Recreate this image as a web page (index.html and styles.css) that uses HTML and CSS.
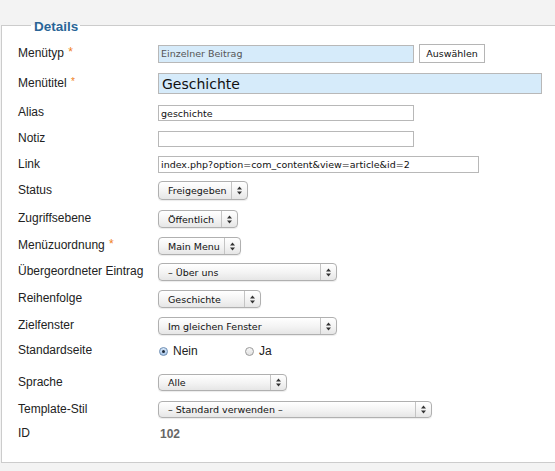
FILE: index.html
```html
<!DOCTYPE html>
<html lang="de">
<head>
<meta charset="utf-8">
<title>Details</title>
<link rel="stylesheet" href="styles.css">
</head>
<body>
<fieldset class="details">
  <legend class="legend">Details</legend>

  <div class="row row-type">
    <span class="lbl">Menütyp <span class="req">*</span></span>
    <input class="field field-ro w256 h19" type="text" value="Einzelner Beitrag" readonly>
    <span class="btn">Auswählen</span>
  </div>

  <div class="row row-title">
    <span class="lbl">Menütitel <span class="req req-sm">*</span></span>
    <input class="field field-title" type="text" value="Geschichte">
  </div>

  <div class="row row-alias">
    <span class="lbl">Alias</span>
    <input class="field w256" type="text" value="geschichte">
  </div>

  <div class="row row-note">
    <span class="lbl">Notiz</span>
    <input class="field w256" type="text" value="">
  </div>

  <div class="row row-link">
    <span class="lbl">Link</span>
    <input class="field w321" type="text" value="index.php?option=com_content&amp;view=article&amp;id=2" readonly>
  </div>

  <div class="row row-status">
    <span class="lbl">Status</span>
    <div class="select w90"><span class="sel-text">Freigegeben</span><span class="sel-arrow"><svg width="5" height="9" viewBox="0 0 5 9"><path d="M0 3.6 L2.5 0.4 L5 3.6 Z M0 5.4 L5 5.4 L2.5 8.6 Z" fill="#333"/></svg></span></div>
  </div>

  <div class="row row-access">
    <span class="lbl">Zugriffsebene</span>
    <div class="select w80"><span class="sel-text">Öffentlich</span><span class="sel-arrow"><svg width="5" height="9" viewBox="0 0 5 9"><path d="M0 3.6 L2.5 0.4 L5 3.6 Z M0 5.4 L5 5.4 L2.5 8.6 Z" fill="#333"/></svg></span></div>
  </div>

  <div class="row row-menu">
    <span class="lbl">Menüzuordnung <span class="req">*</span></span>
    <div class="select w83"><span class="sel-text">Main Menu</span><span class="sel-arrow"><svg width="5" height="9" viewBox="0 0 5 9"><path d="M0 3.6 L2.5 0.4 L5 3.6 Z M0 5.4 L5 5.4 L2.5 8.6 Z" fill="#333"/></svg></span></div>
  </div>

  <div class="row row-parent">
    <span class="lbl">Übergeordneter Eintrag</span>
    <div class="select w179"><span class="sel-text">– Über uns</span><span class="sel-arrow"><svg width="5" height="9" viewBox="0 0 5 9"><path d="M0 3.6 L2.5 0.4 L5 3.6 Z M0 5.4 L5 5.4 L2.5 8.6 Z" fill="#333"/></svg></span></div>
  </div>

  <div class="row row-order">
    <span class="lbl">Reihenfolge</span>
    <div class="select w103"><span class="sel-text">Geschichte</span><span class="sel-arrow"><svg width="5" height="9" viewBox="0 0 5 9"><path d="M0 3.6 L2.5 0.4 L5 3.6 Z M0 5.4 L5 5.4 L2.5 8.6 Z" fill="#333"/></svg></span></div>
  </div>

  <div class="row row-target">
    <span class="lbl">Zielfenster</span>
    <div class="select w179"><span class="sel-text">Im gleichen Fenster</span><span class="sel-arrow"><svg width="5" height="9" viewBox="0 0 5 9"><path d="M0 3.6 L2.5 0.4 L5 3.6 Z M0 5.4 L5 5.4 L2.5 8.6 Z" fill="#333"/></svg></span></div>
  </div>

  <div class="row row-radio">
    <span class="lbl">Standardseite</span>
    <span class="opt"><span class="radio radio-on"></span>Nein</span>
    <span class="opt"><span class="radio"></span>Ja</span>
  </div>

  <div class="row row-lang">
    <span class="lbl">Sprache</span>
    <div class="select w129"><span class="sel-text">Alle</span><span class="sel-arrow"><svg width="5" height="9" viewBox="0 0 5 9"><path d="M0 3.6 L2.5 0.4 L5 3.6 Z M0 5.4 L5 5.4 L2.5 8.6 Z" fill="#333"/></svg></span></div>
  </div>

  <div class="row row-tpl">
    <span class="lbl">Template-Stil</span>
    <div class="select w274"><span class="sel-text">– Standard verwenden –</span><span class="sel-arrow"><svg width="5" height="9" viewBox="0 0 5 9"><path d="M0 3.6 L2.5 0.4 L5 3.6 Z M0 5.4 L5 5.4 L2.5 8.6 Z" fill="#333"/></svg></span></div>
  </div>

  <div class="row row-id">
    <span class="lbl">ID</span>
    <span class="idval">102</span>
  </div>
</fieldset>
</body>
</html>
```

FILE: styles.css
```css
html, body {
  margin: 0;
  padding: 0;
}

body {
  background: #f3f3f3;
  overflow: hidden;
  width: 555px;
  height: 471px;
  font-family: "Liberation Sans", Arial, sans-serif;
  font-size: 12px;
  color: #222;
}

.details {
  margin: 15px 0 0 1px;
  width: 554px;
  box-sizing: border-box;
  border: 1px solid #cccccc;
  border-right: none;
  background: #ffffff;
  padding: 9px 0 20px 16px;
  min-inline-size: 0;
}

.legend {
  margin-left: 13px;
  padding: 4px 2px 0 3px;
  font-family: "Liberation Sans", Arial, sans-serif;
  font-size: 13.5px;
  font-weight: bold;
  line-height: 16px;
  color: #2a6597;
}

.row {
  display: flex;
  align-items: center;
  height: 18px;
  margin-bottom: 9px;
}

.row-type { height: 19px; margin-bottom: 10px; }
.row-title { height: 21px; margin-bottom: 11px; }
.row-alias { height: 16px; margin-bottom: 10px; }
.row-note { height: 16px; margin-bottom: 9px; }
.row-link { height: 17px; margin-bottom: 8px; }
.row-status { height: 19px; margin-bottom: 10px; }
.row-access { margin-bottom: 9px; }
.row-menu { margin-bottom: 8px; }
.row-parent { margin-bottom: 9px; }
.row-order { margin-bottom: 9px; }
.row-target { margin-bottom: 6px; }
.row-radio { height: 20px; margin-bottom: 13px; }
.row-lang { height: 17px; margin-bottom: 10px; }
.row-tpl { height: 17px; margin-bottom: 8px; }
.row-id { height: 16px; margin-bottom: 0; }

.lbl {
  width: 140px;
  flex: none;
  line-height: 14px;
  margin-top: -2px;
  color: #222;
}

.row-title .lbl { margin-top: 0; }

.req {
  color: #f08020;
  font-size: 12px;
  margin-left: 1px;
  position: relative;
  top: -1px;
}

.req-sm {
  font-size: 10px;
  top: -2px;
}

.field {
  box-sizing: border-box;
  height: 16px;
  margin: 0;
  padding: 0 2px;
  border: 1px solid #b8b8b8;
  background: #ffffff;
  font-family: "DejaVu Sans", Verdana, sans-serif;
  font-size: 9.5px;
  color: #111;
  outline: none;
}

.field-ro {
  background: #d6ebfa;
  color: #555;
}

.h19 { height: 18px; }

.field-title {
  width: 384px;
  height: 21px;
  background: #d6ebfa;
  font-size: 14px;
  color: #111;
  padding: 0 3px;
}

.w256 { width: 256px; }
.w321 { width: 321px; height: 17px; }

.btn {
  box-sizing: border-box;
  margin-left: 5px;
  width: 66px;
  height: 19px;
  border: 1px solid #b5b5b5;
  background: #ffffff;
  font-family: "DejaVu Sans", Verdana, sans-serif;
  font-size: 9.5px;
  color: #111;
  display: flex;
  align-items: center;
  justify-content: center;
}

.select {
  box-sizing: border-box;
  height: 18px;
  display: flex;
  align-items: stretch;
  border: 1px solid #b0b0b0;
  border-radius: 4px;
  background: linear-gradient(#ffffff, #f3f3f3 55%, #e6e6e6);
  box-shadow: 0 1px 1px rgba(0, 0, 0, 0.08);
  font-family: "DejaVu Sans", Verdana, sans-serif;
  font-size: 9.5px;
  color: #111;
}

.row-status .select { height: 19px; }
.row-lang .select, .row-tpl .select { height: 17px; }

.sel-text {
  flex: 1;
  display: flex;
  align-items: center;
  padding-left: 9px;
  white-space: nowrap;
}

.sel-arrow {
  flex: none;
  width: 15px;
  border-left: 1px solid #c4c4c4;
  display: flex;
  align-items: center;
  justify-content: center;
}

.w80 { width: 80px; }
.w83 { width: 83px; }
.w90 { width: 90px; }
.w103 { width: 103px; }
.w129 { width: 129px; }
.w179 { width: 179px; }
.w274 { width: 274px; }

.opt {
  width: 86px;
  display: flex;
  align-items: center;
  color: #222;
}

.radio {
  box-sizing: border-box;
  width: 9px;
  height: 9px;
  margin-left: 1px;
  margin-right: 5px;
  border: 1px solid #9a9a9a;
  border-radius: 50%;
  background: linear-gradient(#f6f6f6, #e2e2e2);
  display: flex;
  align-items: center;
  justify-content: center;
}

.radio-on {
  border-color: #6c8db3;
  background: linear-gradient(#d6e6f7, #a9c6e8);
}

.radio-on::after {
  content: "";
  width: 3px;
  height: 3px;
  border-radius: 50%;
  background: #1e2a3a;
}

.idval {
  padding-left: 2px;
  font-weight: bold;
  color: #666;
}
```
